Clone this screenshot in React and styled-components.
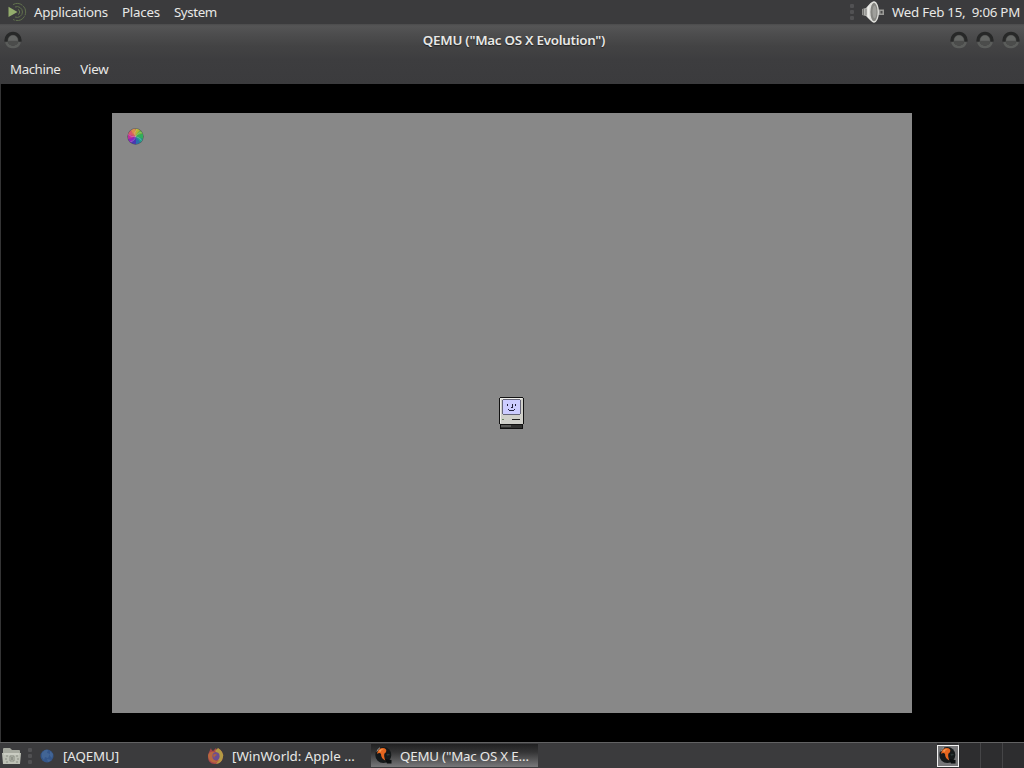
import React from 'react';
import styled, { createGlobalStyle } from 'styled-components';

const GlobalStyle = createGlobalStyle`
  * {
    box-sizing: border-box;
  }

  body {
    margin: 0;
    overflow: hidden;
    background: #000;
    color: #e8e8e6;
    font-family: 'Noto Sans', sans-serif;
    font-size: 13.33px;
  }

  svg {
    display: block;
    flex: none;
  }
`;

const Desktop = styled.div`
  width: 1024px;
  height: 768px;
  display: flex;
  flex-direction: column;
`;

const TopPanel = styled.header`
  height: 24px;
  display: flex;
  align-items: center;
  padding: 0 4px 0 7px;
  background: #3b3b3d;
`;

const PanelMenu = styled.nav`
  display: flex;
  gap: 14px;
  margin-left: 7px;
`;

const Label = styled.span`
  line-height: 18px;
  white-space: nowrap;
  letter-spacing: ${({ $spacing }) => $spacing || 0}px;
`;

const Tray = styled.div`
  display: flex;
  align-items: center;
  margin-left: auto;
`;

const Clock = styled.time`
  margin-left: 7px;
  line-height: 18px;
  white-space: nowrap;
  letter-spacing: -0.26px;
`;

const Window = styled.main`
  flex: 1;
  display: flex;
  flex-direction: column;
`;

const WindowHeader = styled.div`
  height: 60px;
  background: linear-gradient(#4b4b4c 0, #555556 2px, #4d4d4e 10px, #434344 22px, #3d3d3f 36px, #3b3b3d 60px);
`;

const TitleBar = styled.div`
  height: 32px;
  display: grid;
  grid-template-columns: 78px 1fr 74px;
  align-items: center;
  padding-left: 4px;
`;

const WindowTitle = styled.h1`
  margin: 0;
  padding-right: 4px;
  text-align: center;
  font-size: 13.33px;
  font-weight: 600;
  line-height: 18px;
  letter-spacing: -0.25px;
  text-shadow: 0 1px 1px #222;
`;

const WindowButtons = styled.div`
  display: flex;
  gap: 8px;
`;

const MenuBar = styled.nav`
  height: 28px;
  display: flex;
  gap: 20px;
  padding: 4px 10px;
`;

const Display = styled.section`
  flex: 1;
  display: flex;
  justify-content: center;
  padding-top: 29px;
  border-left: 1px solid #343435;
  background: #000;
`;

const GuestScreen = styled.div`
  width: 800px;
  height: 600px;
  margin-right: 1px;
  position: relative;
  display: flex;
  align-items: center;
  justify-content: center;
  background: #888;
`;

const Cursor = styled.div`
  position: absolute;
  left: 15px;
  top: 15px;
`;

const BottomPanel = styled.footer`
  height: 26px;
  display: flex;
  align-items: center;
  gap: 5px;
  padding-left: 2px;
  border-top: 1px solid #626263;
  background: #3b3b3d;
`;

const TaskList = styled.div`
  display: flex;
  gap: 1px;
  margin-left: -3px;
`;

const Task = styled.div`
  width: 167px;
  height: 23px;
  display: flex;
  align-items: center;
  gap: 8px;
  padding-left: 4px;
  background: ${({ $active }) => ($active ? 'linear-gradient(#202021, #343435 35%, #78787a)' : 'none')};
`;

const Workspaces = styled.div`
  height: 25px;
  display: flex;
  margin-left: auto;
`;

const Workspace = styled.div`
  width: 22px;
  display: flex;
  align-items: center;
  justify-content: center;
  background: #2d2d2f;
  border-right: 1px solid #454547;

  &:last-child {
    width: 21px;
    border-right: none;
  }
`;

const MiniWindow = styled.div`
  width: 22px;
  height: 22px;
  flex: none;
  display: flex;
  align-items: center;
  justify-content: center;
  border: 1px solid #f2f2f2;
  background: #777779;
`;

const MateLogo = () => (
  <svg width="20" height="20" viewBox="0 0 20 20" fill="none">
    <path d="M1.5 4.8 10.5 10 1.500 15Z" fill="#94ad6d" />
    <path d="M6 2.6A8.5 8.5 0 1 1 6 17.4" stroke="#61714d" strokeDasharray="10 1" />
    <path d="M8 5A5.4 5.4 0 1 1 8 15" stroke="#61714d" />
    <path d="M11 7.5a2.7 2.7 0 0 1 0 5" stroke="#6b7d54" />
  </svg>
);

const Grip = () => (
  <svg width="6" height="18" viewBox="0 0 6 18" fill="#515153">
    <rect x="1" y="1" width="4" height="4" rx="1" />
    <rect x="1" y="7" width="4" height="4" rx="1" />
    <rect x="1" y="13" width="4" height="4" rx="1" />
  </svg>
);

const Speaker = () => (
  <svg width="30" height="24" viewBox="-6 0 30 24">
    <defs>
      <linearGradient id="cone">
        <stop stopColor="#8a8a87" />
        <stop offset=".5" stopColor="#efefeb" />
        <stop offset="1" stopColor="#c4c4c0" />
      </linearGradient>
    </defs>
    <path d="M17 9.500h6V15h-6z" fill="#9a9a97" />
    <path d="M19.500 11h2v2.500h-2z" fill="#4b4b4b" />
    <path d="M1 9 5 8l4.500-5q2-1.500 4-1.500v21q-2 0-4-2L5 16l-4-1z" fill="url(#cone)" />
    <ellipse cx="13" cy="12" rx="4.300" ry="10" fill="#858581" stroke="#e0e0dc" strokeWidth="1.300" />
    <ellipse cx="13.500" cy="12" rx="2" ry="6.500" fill="#9f9f9b" />
    <path d="M2.500 9v6M5 8.500v7" stroke="#737370" />
  </svg>
);

const RoundButton = () => (
  <svg width="18" height="20" viewBox="0 0 18 20" fill="none">
    <circle cx="9" cy="10" r="7" fill="#3a3b3b" />
    <path d="M2.300 12a7 7 0 0 0 13.400 0" stroke="#5b5d5b" strokeWidth="2.600" />
    <path d="M2 11.500A7.100 7.100 0 1 1 16 11.500" stroke="#272828" strokeWidth="3" />
    <circle cx="9" cy="10.200" r="4.900" fill="#646664" />
    <path d="M4.100 10.800h9.800a4.900 4.900 0 0 1-9.800 0" fill="#4b4c4b" />
  </svg>
);

const wheelColors = ['#b5b534', '#68b43f', '#2fae5c', '#1fa08c', '#2a6fae', '#4a36b4', '#8a24c0', '#c02d98', '#d8586a', '#dc8a4c'];

const ColorWheel = () => (
  <svg width="17" height="17" viewBox="-8.5 -8.5 17 17">
    <circle r="8.2" fill="#54565e" />
    {wheelColors.map((color, i) => (
      <path key={color} d="M0 0Q-1-5 0-7.7A7.7 7.7 0 0 1 4.53-6.23Q2-3 0 0" fill={color} transform={`rotate(${i * 36})`} />
    ))}
    <path d="M0 0Q3-5 6-4M0 0Q5 1 6 4M0 0Q-1 5-5 5M0 0Q-5 1-7-2M0 0Q-2-4 1-7" fill="none" stroke="#deded2" strokeWidth=".6" opacity=".5" />
  </svg>
);

const HappyMac = () => (
  <svg width="26" height="32" viewBox="0 0 26 32" shapeRendering="crispEdges">
    <path d="M1 0h23v1h1v26h-1v5H1v-5H0V1h1z" fill="#111" />
    <path d="M1 1h23v26H1z" fill="#d0d0ca" />
    <path d="M1 1h22v1H2v24H1z" fill="#f1f1ed" />
    <path d="M4 2h17v1h1v14h-1v1H4v-1H3V3h1z" fill="#66667a" />
    <path d="M4 3h17v14H4z" fill="#cdcdff" />
    <path d="M8 7h1v2H8zM16 7h1v2h-1zM13 7h1v4h-2v-1h1zM9 12h1v1H9zM10 13h5v1h-5zM15 12h1v1h-1z" fill="#22223b" />
    <path d="M3 22h2v1H3z" fill="#6c8b64" />
    <path d="M13 22h8v1h-8z" fill="#222" />
    <path d="M1 27h23v1H1z" fill="#111" />
    <path d="M2 28h21v3H2z" fill="#30302f" />
    <path d="M2 28h10v2H2z" fill="#5a5a58" />
  </svg>
);

const FileFolder = () => (
  <svg width="20" height="18" viewBox="0 0 20 18">
    <path d="M1 2q0-1 1-1h6l2 2h7q1 0 1 1v12H1z" fill="#a7aaa0" />
    <path d="M0 6h19l-1 11H1z" fill="#bdc0b5" />
    <path d="M2 7h15" stroke="#d6d8cf" />
    <path d="M4 9h2M3 12h2M4 15h2M14 9h2M15 12h2M14 15h2M8 9h4v5H8z" stroke="#8a8e84" fill="none" />
    <path d="M10 10v3" stroke="#63675f" />
  </svg>
);

const Globe = () => (
  <svg width="16" height="16" viewBox="0 0 16 16">
    <circle cx="8" cy="8" r="6.5" fill="#34568a" />
    <path d="M3 5q3-4 6-3L8 5l3 1-2 4-3-1-1 3-2-3M11 3l3 3-1 4-2-2M8 11l4 1-3 2" fill="#4c6f9c" opacity=".6" />
  </svg>
);

const Firefox = () => (
  <svg width="17" height="18" viewBox="0 0 17 18">
    <path d="M4 1q0 2 2 3l3-3q0 2 3 3l-1-3q6 4 5 9-1 7-8 7-7 0-7-7 0-4 3-9" fill="#a8464c" />
    <path d="M11 1q6 4 5 9-1 6-7 7 3-4 2-8 0-3-3-5 2-2 3-3" fill="#b39a44" />
    <path d="M1 8q2-4 6-3l3 2-2 1-2 3 3 3 4-1q-3 4-8 2-4-2-4-7" fill="#b8683f" />
    <ellipse cx="9" cy="9.3" rx="3.6" ry="4" fill="#6b4d92" />
    <path d="M6 8q2-2 4 0L8 9l-1 2" fill="#b0603f" />
  </svg>
);

const QemuIcon = () => (
  <svg width="17" height="19" viewBox="0 0 17 19">
    <circle cx="8.3" cy="9" r="8" fill="#15191a" />
    <path d="m10 13 6.5 1v3.5H12z" fill="#0b0e0f" />
    <path d="M2.300 6.500Q4 1.800 8 2q3.500.4 3.300 3-.2 1.600-1.800 2.500-1 2 .8 7-4.300-2-4.300-6.500Q4.500 6 2.300 8z" fill="#e5661f" />
    <path d="M3.500 5Q5.500 2.500 8.500 3 6 4 5.500 6z" fill="#f79a52" />
    <path d="M1.800 5.500Q3 2.500 5 1.800" fill="none" stroke="#c8c0b8" strokeWidth=".8" />
    <path d="M11.500 8q2.500-1 3.500 1l-3 .8z" fill="#2c3938" />
  </svg>
);

const tasks = [
  { title: '[AQEMU]', icon: <Globe />, spacing: -0.1 },
  { title: '[WinWorld: Apple …', icon: <Firefox /> },
  { title: 'QEMU ("Mac OS X E…', icon: <QemuIcon />, active: true, spacing: -0.2 },
];

const App = () => {
  return (
    <Desktop>
      <GlobalStyle />
      <TopPanel>
        <MateLogo />
        <PanelMenu>
          <Label $spacing={-0.22}>Applications</Label>
          <Label $spacing={-0.22}>Places</Label>
          <Label $spacing={-0.4}>System</Label>
        </PanelMenu>
        <Tray>
          <Grip />
          <Speaker />
          <Clock>Wed Feb 15,&nbsp; 9:06 PM</Clock>
        </Tray>
      </TopPanel>
      <Window>
        <WindowHeader>
          <TitleBar>
            <RoundButton />
            <WindowTitle>QEMU ("Mac OS X Evolution")</WindowTitle>
            <WindowButtons>
              <RoundButton />
              <RoundButton />
              <RoundButton />
            </WindowButtons>
          </TitleBar>
          <MenuBar>
            <Label $spacing={-0.45}>Machine</Label>
            <Label $spacing={-0.2}>View</Label>
          </MenuBar>
        </WindowHeader>
        <Display>
          <GuestScreen>
            <Cursor>
              <ColorWheel />
            </Cursor>
            <HappyMac />
          </GuestScreen>
        </Display>
      </Window>
      <BottomPanel>
        <FileFolder />
        <Grip />
        <TaskList>
          {tasks.map(({ title, icon, active, spacing }) => (
            <Task key={title} $active={active}>
              {icon}
              <Label $spacing={spacing}>{title}</Label>
            </Task>
          ))}
        </TaskList>
        <Workspaces>
          <Workspace>
            <MiniWindow>
              <QemuIcon />
            </MiniWindow>
          </Workspace>
          <Workspace />
          <Workspace />
          <Workspace />
        </Workspaces>
      </BottomPanel>
    </Desktop>
  );
};

export default App;
